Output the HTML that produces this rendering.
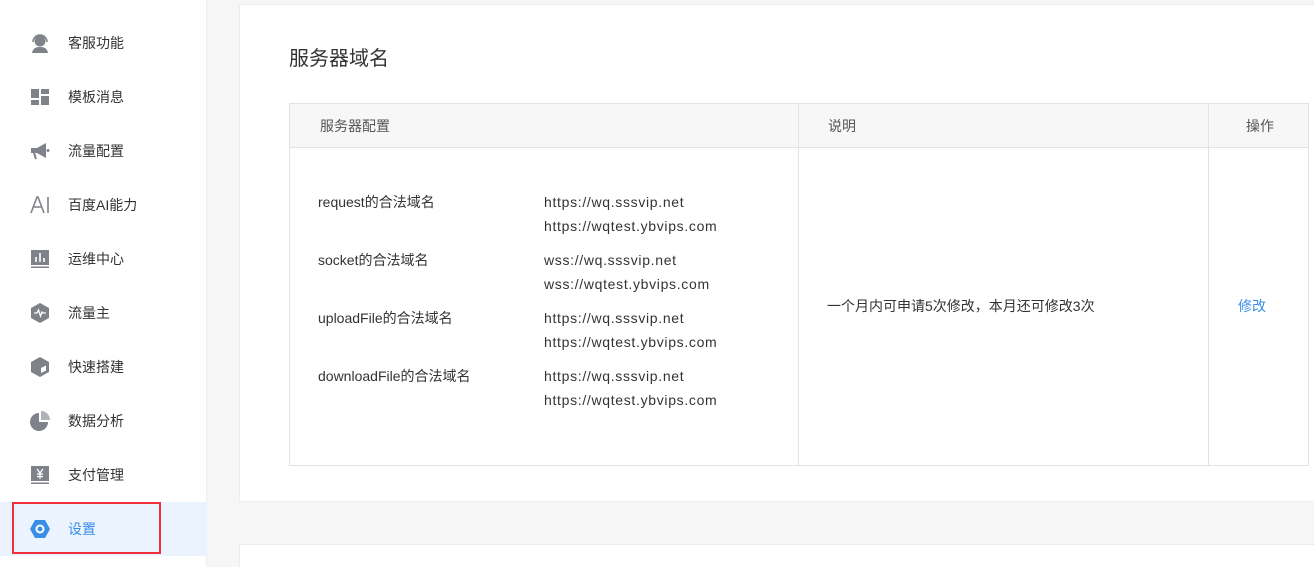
<!DOCTYPE html>
<html><head><meta charset="utf-8"><style>
*{margin:0;padding:0;box-sizing:border-box}
html{width:1314px;height:567px;overflow:hidden}
body{width:1314px;height:567px;overflow:hidden;background:#f6f6f6;font-family:"Liberation Sans","Noto Sans CJK SC",sans-serif;color:#333;position:relative}
.side{position:absolute;left:0;top:0;width:207px;height:567px;background:#fff;border-right:1px solid #eee}
.it{position:absolute;left:0;width:207px;height:54px;font-size:14px;color:#333}
.it span{position:absolute;left:68px;top:50%;transform:translateY(-50%)}
.it svg{position:absolute;left:29px;top:50%;transform:translateY(-50%)}
.act{background:#ebf3fe;color:#3a8ee6}
.box{position:absolute;left:12px;top:502px;width:149px;height:52px;border:2px solid #f0303a}
.card{position:absolute;left:239px;top:4px;width:1090px;height:498px;background:#fff;border:1px solid #ececec}
.card2{position:absolute;left:239px;top:544px;width:1090px;height:23px;background:#fff;border:1px solid #ececec;border-bottom:none}
h2{position:absolute;left:289px;top:42px;font-size:20px;font-weight:normal;color:#333}
.t{position:absolute;left:289px;top:103px;width:1020px;height:363px;border:1px solid #e3e3e3}
.hd{position:absolute;left:0;top:0;width:100%;height:44px;background:#f7f7f7;border-bottom:1px solid #e3e3e3}
.vl{position:absolute;top:0;width:1px;height:100%;background:#e3e3e3}
.tx{position:absolute;font-size:14px;white-space:nowrap;line-height:24px}
.u{letter-spacing:0.68px}
.g{color:#555}
</style></head><body>
<div class="side">
<div class="it" style="top:16px"><svg width="22" height="22" viewBox="0 0 22 22"><circle cx="11" cy="9" r="5.5" fill="#7f8288"/><path d="M4 10a7 7 0 0 1 14 0" stroke="#7f8288" stroke-width="1.6" fill="none"/><path d="M3 21c1-5 4-6 8-6s7 1 8 6z" fill="#7f8288"/></svg><span>客服功能</span></div>
<div class="it" style="top:70px"><svg width="22" height="22" viewBox="0 0 22 22"><rect x="2" y="3" width="8" height="9" fill="#7f8288"/><rect x="2" y="14" width="8" height="5" fill="#7f8288"/><rect x="12" y="3" width="8" height="5" fill="#7f8288"/><rect x="12" y="10" width="8" height="9" fill="#7f8288"/></svg><span>模板消息</span></div>
<div class="it" style="top:124px"><svg width="22" height="22" viewBox="0 0 22 22"><path d="M2 8h6l9-5v15l-9-5H2z" fill="#7f8288"/><path d="M5 13l2 6" stroke="#7f8288" stroke-width="2"/><circle cx="19" cy="10.5" r="1.5" fill="#7f8288"/></svg><span>流量配置</span></div>
<div class="it" style="top:178px"><svg width="22" height="22" viewBox="0 0 22 22"><path d="M2 19L8 3h1l6 16M4.5 13h8M19 3v16" stroke="#7f8288" stroke-width="1.6" fill="none"/></svg><span>百度AI能力</span></div>
<div class="it" style="top:232px"><svg width="22" height="22" viewBox="0 0 22 22"><rect x="2" y="2" width="18" height="15" fill="#7f8288"/><path d="M7 14V9M11 14V5M15 14V10" stroke="#fff" stroke-width="1.6"/><rect x="2" y="18.5" width="18" height="1.5" fill="#7f8288"/></svg><span>运维中心</span></div>
<div class="it" style="top:286px"><svg width="22" height="22" viewBox="0 0 22 22"><path d="M11 1l9 5v10l-9 5-9-5V6z" fill="#7f8288"/><path d="M5 11h3l1.5-3 2 6 1.5-4 1 1h3" stroke="#fff" stroke-width="1.3" fill="none"/></svg><span>流量主</span></div>
<div class="it" style="top:340px"><svg width="22" height="22" viewBox="0 0 22 22"><path d="M11 1l9 5v10l-9 5-9-5V6z" fill="#7f8288"/><path d="M12 12l5-2.5v5L12 17z" fill="#fff"/></svg><span>快速搭建</span></div>
<div class="it" style="top:394px"><svg width="22" height="22" viewBox="0 0 22 22"><path d="M10 3a9 9 0 1 0 9 9h-9z" fill="#7f8288"/><path d="M12 1a9 9 0 0 1 9 9h-9z" fill="#b0b2b6"/></svg><span>数据分析</span></div>
<div class="it" style="top:448px"><svg width="22" height="22" viewBox="0 0 22 22"><rect x="2" y="2" width="18" height="15" fill="#7f8288"/><path d="M8 5l3 4 3-4M11 9v6M8 10h6M8 12.5h6" stroke="#fff" stroke-width="1.3" fill="none"/><rect x="2" y="18.5" width="18" height="1.5" fill="#7f8288"/></svg><span>支付管理</span></div>
<div class="it act" style="top:502px"><svg width="22" height="22" viewBox="0 0 22 22"><path d="M6 2h10l5 9-5 9H6l-5-9z" fill="#3a8ee6"/><circle cx="11" cy="11" r="3.5" fill="none" stroke="#fff" stroke-width="2"/></svg><span>设置</span></div>
</div>
<div class="box"></div>
<div class="card"></div>
<div class="card2"></div>
<h2>服务器域名</h2>
<div class="t">
<div class="hd"></div>
<div class="vl" style="left:508px"></div>
<div class="vl" style="left:918px"></div>
<div class="tx g" style="left:30px;top:10px">服务器配置</div>
<div class="tx g" style="left:538px;top:10px">说明</div>
<div class="tx g" style="left:920px;width:100px;text-align:center;top:10px">操作</div>
<div class="tx" style="left:28px;top:86px">request的合法域名</div>
<div class="tx u" style="left:254px;top:86px">https://wq.sssvip.net<br>https://wqtest.ybvips.com</div>
<div class="tx" style="left:28px;top:144px">socket的合法域名</div>
<div class="tx u" style="left:254px;top:144px">wss://wq.sssvip.net<br>wss://wqtest.ybvips.com</div>
<div class="tx" style="left:28px;top:202px">uploadFile的合法域名</div>
<div class="tx u" style="left:254px;top:202px">https://wq.sssvip.net<br>https://wqtest.ybvips.com</div>
<div class="tx" style="left:28px;top:260px">downloadFile的合法域名</div>
<div class="tx u" style="left:254px;top:260px">https://wq.sssvip.net<br>https://wqtest.ybvips.com</div>
<div class="tx" style="left:537px;top:190px">一个月内可申请5次修改，本月还可修改3次</div>
<div class="tx" style="left:920px;width:84px;text-align:center;top:190px;color:#3a8ee6">修改</div>
</div>
</body></html>
